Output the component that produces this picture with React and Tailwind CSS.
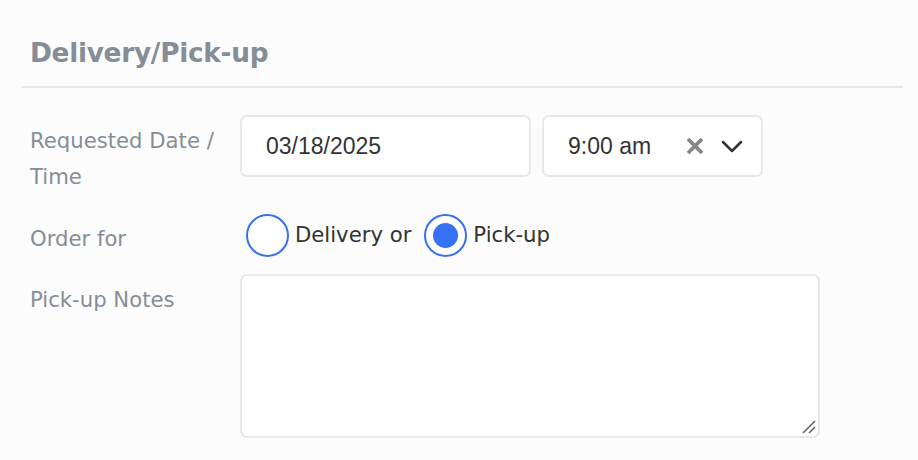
import React from "react";

export default function App() {
  return (
    <div className="w-[918px] h-[460px] bg-[#fcfcfc] overflow-hidden font-['DejaVu_Sans',sans-serif]">
      <div className="pl-[22px] pr-[15px]">
        <div className="pl-[8px] pt-[36px] pb-[16px] border-b-2 border-[#e8e8e8]">
          <h2 className="text-[26.4px] leading-[34px] font-bold text-[#858e97] tracking-[-0.3px]">Delivery/Pick-up</h2>
        </div>
        <div className="pl-[8px] pt-[27px] flex flex-col">
          <div className="flex">
            <div className="w-[210px] text-[21.2px] leading-[36px] text-[#858e97] pt-[8px]">Requested Date /<br />Time</div>
            <div className="flex gap-[11px]">
              <div className="w-[291px] h-[62px] bg-white border-2 border-[#e8e8e8] rounded-[7px] flex items-center pl-[24px] text-[23px] text-[#333] font-['Liberation_Sans',sans-serif]">03/18/2025</div>
              <div className="w-[221px] h-[62px] bg-white border-2 border-[#e8e8e8] rounded-[7px] flex items-center pl-[24px] pr-[18px] text-[23px] text-[#333] font-['Liberation_Sans',sans-serif]">
                <span className="flex-1">9:00 am</span>
                <svg width="18" height="18" viewBox="0 0 18 18" className="mr-[17px]">
                  <path d="M2 2 L16 16 M16 2 L2 16" stroke="#858585" strokeWidth="3.8" strokeLinecap="butt" />
                </svg>
                <svg width="22" height="13" viewBox="0 0 22 13">
                  <path d="M2 2 L11 11 L20 2" stroke="#333" strokeWidth="2.5" fill="none" strokeLinecap="round" strokeLinejoin="round" />
                </svg>
              </div>
            </div>
          </div>
          <div className="flex items-center mt-[18px]">
            <div className="w-[216px] text-[21.2px] leading-[36px] text-[#858e97] pt-[8px]">Order for</div>
            <label className="flex items-center">
              <span className="w-[43px] h-[43px] rounded-full border-2 border-[#3571f3] bg-white"></span>
              <span className="ml-[6px] text-[21.2px] text-[#333]">Delivery or</span>
            </label>
            <label className="flex items-center ml-[13px]">
              <span className="w-[43px] h-[43px] rounded-full border-2 border-[#3571f3] bg-white flex items-center justify-center">
                <span className="w-[25px] h-[25px] rounded-full bg-[#3571f3]"></span>
              </span>
              <span className="ml-[6px] text-[21.2px] text-[#333]">Pick-up</span>
            </label>
          </div>
          <div className="flex mt-[17px]">
            <div className="w-[210px] text-[21.2px] leading-[36px] text-[#858e97] pt-[8px]">Pick-up Notes</div>
            <div className="relative w-[580px] h-[164px] bg-white border-2 border-[#e8e8e8] rounded-[7px]">
              <svg width="14" height="14" viewBox="0 0 14 14" className="absolute right-[2px] bottom-[2px]">
                <path d="M1 13 L13 1 M7 13 L13 7" stroke="#666" strokeWidth="1.6" />
              </svg>
            </div>
          </div>
        </div>
      </div>
    </div>
  );
}
